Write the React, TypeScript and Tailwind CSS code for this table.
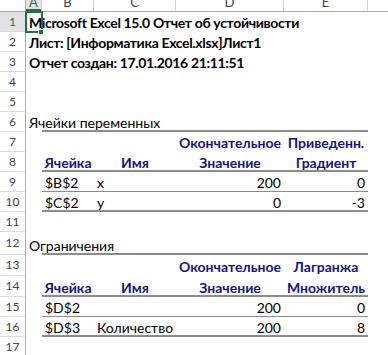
import React from 'react';

// column widths A..F
const COL_W = ['w-[16px]', 'w-[52px]', 'w-[82px]', 'w-[108px]', 'w-[84px]', 'w-[60px]'];
const LETTERS = ['A', 'B', 'C', 'D', 'E', 'F'];

const ROW_H: Record<number, string> = {
  20: 'h-[20px]',
  21: 'h-[21px]',
  23: 'h-[23px]',
};

type Kind = 'title' | 'text' | 'head' | 'num';
type Cell = { v: string; k: Kind; align?: 'left' | 'center' | 'right' };
type Line = 'thin' | 'medium';
interface SheetRow {
  n: number;
  h: number;
  cells?: Record<number, Cell>;
  line?: Line;
}

const head = (v: string): Cell => ({ v, k: 'head', align: 'center' });
const txt = (v: string): Cell => ({ v, k: 'text', align: 'left' });
const num = (v: string): Cell => ({ v, k: 'num', align: 'right' });

const rows: SheetRow[] = [
  { n: 1, h: 20, cells: { 0: { v: 'Microsoft Excel 15.0 Отчет об устойчивости', k: 'title' } } },
  { n: 2, h: 20, cells: { 0: { v: 'Лист: [Информатика Excel.xlsx]Лист1', k: 'title' } } },
  { n: 3, h: 20, cells: { 0: { v: 'Отчет создан: 17.01.2016 21:11:51', k: 'title' } } },
  { n: 4, h: 20 },
  { n: 5, h: 20 },
  { n: 6, h: 20, cells: { 0: txt('Ячейки переменных') }, line: 'medium' },
  { n: 7, h: 20, cells: { 3: head('Окончательное'), 4: head('Приведенн.') } },
  { n: 8, h: 20, cells: { 1: head('Ячейка'), 2: head('Имя'), 3: head('Значение'), 4: head('Градиент') }, line: 'medium' },
  { n: 9, h: 20, cells: { 1: txt('$B$2'), 2: txt('x'), 3: num('200'), 4: num('0') }, line: 'thin' },
  { n: 10, h: 20, cells: { 1: txt('$C$2'), 2: txt('y'), 3: num('0'), 4: num('-3') }, line: 'medium' },
  { n: 11, h: 20 },
  { n: 12, h: 23, cells: { 0: txt('Ограничения') }, line: 'medium' },
  { n: 13, h: 21, cells: { 3: head('Окончательное'), 4: head('Лагранжа') } },
  { n: 14, h: 21, cells: { 1: head('Ячейка'), 2: head('Имя'), 3: head('Значение'), 4: head('Множитель') }, line: 'medium' },
  { n: 15, h: 20, cells: { 1: txt('$D$2'), 3: num('200'), 4: num('0') }, line: 'thin' },
  { n: 16, h: 20, cells: { 1: txt('$D$3'), 2: txt('Количество'), 3: num('200'), 4: num('8') }, line: 'medium' },
  { n: 17, h: 20 },
];

const kindClass: Record<Kind, string> = {
  title: 'font-bold text-black tracking-[-0.35px]',
  text: 'text-black',
  head: 'font-bold text-[#14148a]',
  num: 'text-black',
};

const alignClass = {
  left: 'justify-start',
  center: 'justify-center',
  right: 'justify-end',
};

const lineClass: Record<Line, string> = {
  thin: 'shadow-[inset_0_-1px_0_#8c8c8c]',
  medium: 'shadow-[inset_0_-2px_0_#8c8c8c]',
};

const ColumnHeader = () => (
  <div className="flex h-[12px] border-b border-[#ababab]">
    <div className="w-[26px] shrink-0 border-r border-[#ababab]" />
    {LETTERS.map((l, i) => (
      <div
        key={l}
        className={`${COL_W[i]} shrink-0 flex items-end justify-center overflow-hidden border-r border-[#d4d4d4] pb-[2px] text-[13px] leading-[13px] ${
          i === 0 ? 'bg-[#e1e1e1] text-[#217346] shadow-[inset_0_-2px_0_#217346]' : 'text-[#444]'
        }`}
      >
        {l}
      </div>
    ))}
  </div>
);

const Row = ({ row }: { row: SheetRow }) => (
  <div className={`flex ${ROW_H[row.h]}`}>
    <div
      className={`w-[26px] shrink-0 flex items-center justify-center border-r border-b border-r-[#ababab] border-b-[#dadada] text-[12px] ${
        row.n === 1 ? 'bg-[#e1e1e1] text-[#217346]' : 'text-[#444]'
      }`}
    >
      {row.n}
    </div>
    {COL_W.map((w, i) => {
      const cell = row.cells?.[i];
      const line = row.line && i >= 1 && i <= 4 ? lineClass[row.line] : '';
      return (
        <div
          key={i}
          className={`${w} shrink-0 flex items-end px-[3px] pb-[1px] text-[14px] leading-[17px] whitespace-nowrap ${line} ${
            cell ? alignClass[cell.align ?? 'left'] : ''
          }`}
        >
          {cell && <span className={kindClass[cell.k]}>{cell.v}</span>}
        </div>
      );
    })}
  </div>
);

export default function App() {
  return (
    <div className="relative w-[388px] h-[355px] overflow-hidden bg-white font-['Lato','Roboto',sans-serif]">
      <ColumnHeader />
      {rows.map((r) => (
        <Row key={r.n} row={r} />
      ))}
      {/* active cell A1 */}
      <div className="absolute left-[25px] top-[11px] w-[18px] h-[22px] border-2 border-[#217346]" />
      <div className="absolute left-[38px] top-[29px] w-[6px] h-[6px] bg-[#217346] border border-white" />
    </div>
  );
}
